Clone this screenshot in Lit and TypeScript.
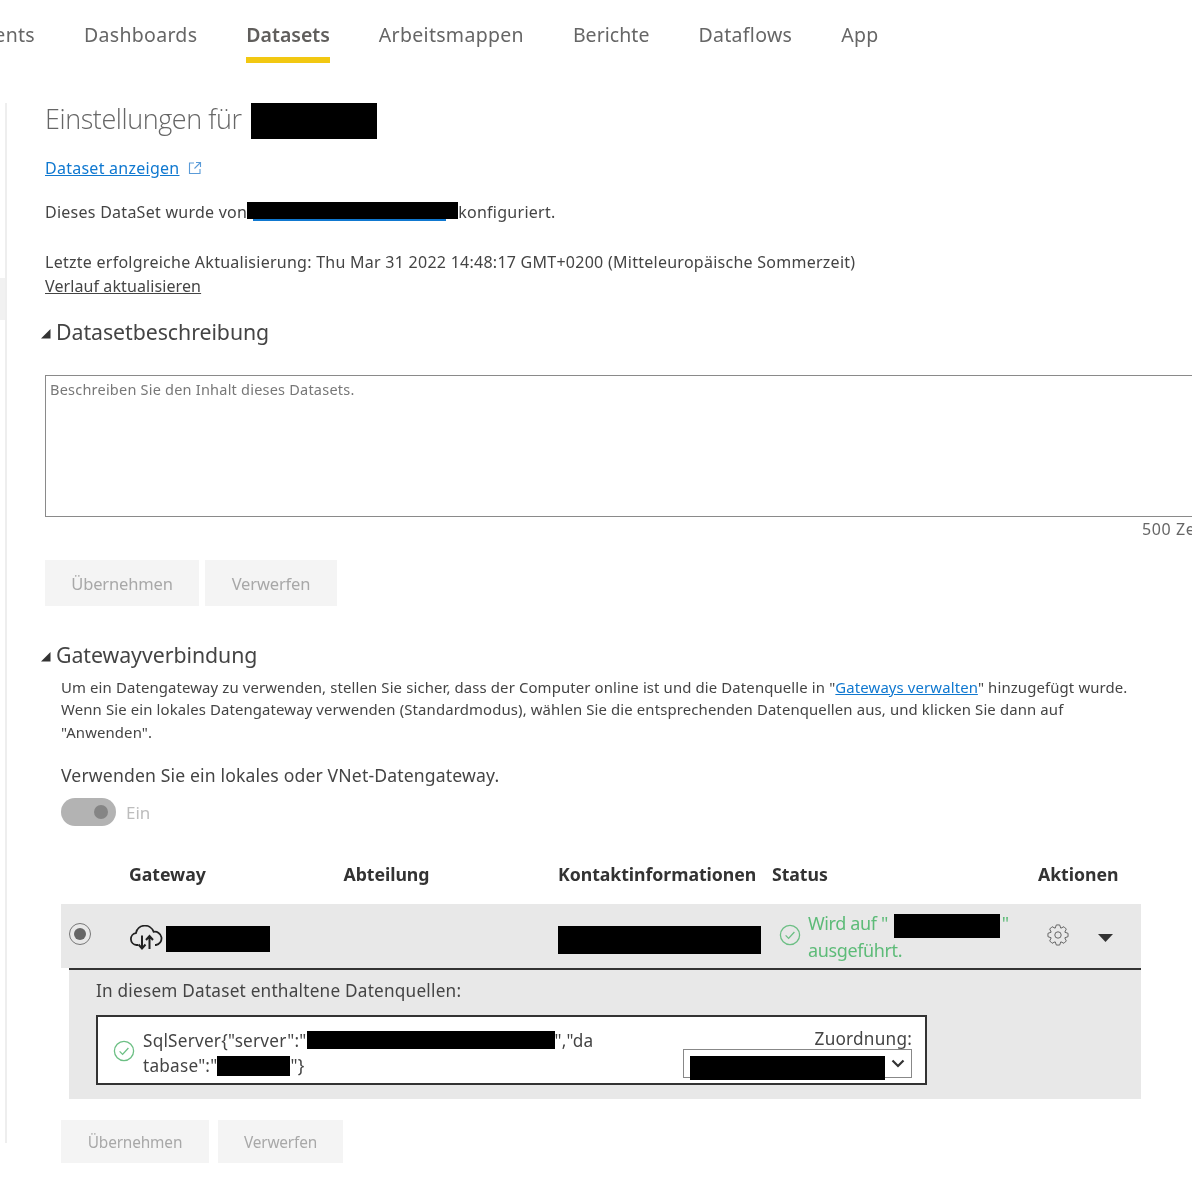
import { LitElement, html, css, svg } from "lit";
import { customElement } from "lit/decorators.js";

const check = (size: number) => html`<svg class="check" width=${size} height=${size} viewBox="0 0 22 22" fill="none">
  <circle cx="11" cy="11" r="9.6" stroke="#6cbf84" stroke-width="1.3"></circle>
  <path d="M6.6 11.4l3 3 5.8-6.4" stroke="#6cbf84" stroke-width="1.3"></path>
</svg>`;

const triangle = html`<svg class="tri" width="10" height="10" viewBox="0 0 10 10"><path d="M0 9.5L9.5 0v9.5z" fill="#333"></path></svg>`;

const gearPath = (() => {
  const cx = 11, cy = 11, n = 8;
  const pts: string[] = [];
  for (let i = 0; i < n; i++) {
    const a = (i / n) * Math.PI * 2;
    const d = Math.PI / n;
    const p = (r: number, t: number) => `${(cx + r * Math.cos(t)).toFixed(2)} ${(cy + r * Math.sin(t)).toFixed(2)}`;
    pts.push(`${i === 0 ? "M" : "L"}${p(7.4, a - d * 0.98)}`);
    pts.push(`L${p(10.2, a - d * 0.42)}`);
    pts.push(`L${p(10.2, a + d * 0.42)}`);
    pts.push(`L${p(7.4, a + d * 0.98)}`);
  }
  return pts.join(" ") + "Z";
})();

@customElement("app-root")
export class AppRoot extends LitElement {
  static styles = css`
    :host {
      display: block;
      width: 1192px;
      height: 1177px;
      overflow: hidden;
      background: #fff;
      font-family: "Noto Sans", "Open Sans", sans-serif;
      color: #333;
      filter: blur(0.3px);
    }
    .nav { display: flex; height: 63px; gap: 49px; font-size: 19.5px; color: #666; letter-spacing: 0.3px; }
    .tab { height: 63px; box-sizing: border-box; padding-top: 20px; line-height: 29px; white-space: nowrap; }
    .tab.cut { width: 35px; display: flex; justify-content: flex-end; overflow: hidden; }
    .tab.on { font-weight: 600; border-bottom: 6px solid #f2c811; color: #605e5c; letter-spacing: 0; }
    .tab.tight { letter-spacing: 0.05px; }
    .page { display: flex; }
    .side { width: 5px; height: 1040px; margin-top: 40px; border-right: 2px solid #eee; flex: none; }
    .side div { margin-top: 175px; height: 42px; background: #f1f1f1; }
    .main { padding-left: 38px; flex: 1; min-width: 0; }
    .redact { display: inline-block; background: #000; vertical-align: top; }
    .title { display: flex; gap: 9px; align-items: center; margin-top: 40px; height: 36px; font-size: 27px; font-weight: 300; color: #666; font-family: "Open Sans", sans-serif; letter-spacing: -0.43px; }
    .title .txt { padding-bottom: 6px; }
    .title .redact { width: 126px; height: 36px; }
    .body { font-size: 16px; line-height: 24px; letter-spacing: 0.26px; white-space: nowrap; color: #444; }
    .linkrow { display: flex; align-items: center; gap: 9px; margin-top: 17px; height: 24px; }
    a { color: #0f78d0; text-decoration: underline; }
    .byline { margin-top: 20px; height: 24px; display: flex; }
    .byline .who { position: relative; width: 211px; height: 24px; }
    .byline .who i { position: absolute; left: 6px; right: 12px; top: 19px; height: 1.5px; background: #0f78d0; }
    .byline .who .redact { position: absolute; left: 0; top: 2px; width: 211px; height: 17px; }
    .updated { margin-top: 26px; }
    .updated a { color: #444; display: block; letter-spacing: 0.1px; }
    .sec { display: flex; align-items: center; gap: 5px; margin-left: -4px; font-size: 21.3px; line-height: 30px; color: #444; letter-spacing: -0.05px; white-space: nowrap; }
    .sec.one { margin-top: 19px; }
    .tri { flex: none; margin-top: 3px; }
    .area { margin-top: 28px; width: 1300px; height: 142px; box-sizing: border-box; border: 1.5px solid #8a8a8a; padding: 2px 4px; font-size: 14.5px; line-height: 22px; letter-spacing: 0.22px; color: #777; }
    .count { margin-left: 1097px; height: 24px; margin-top: 0; font-size: 16px; line-height: 24px; color: #666; white-space: nowrap; letter-spacing: 0.6px; }
    .btns { display: flex; gap: 6px; margin-top: 19px; }
    .btn { height: 46px; display: flex; align-items: center; justify-content: center; background: #f4f4f4; color: #a8a8a8; font-size: 16.5px; letter-spacing: -0.15px; }
    .b1 { width: 154px; } .b2 { width: 132px; }
    .sec.two { margin-top: 34px; }
    .inner { margin-left: 16px; }
    .desc { font-size: 14.9px; line-height: 22.4px; letter-spacing: 0.13px; width: 1090px; color: #444; margin-top: 6px; white-space: nowrap; }
    .q { margin-top: 19px; font-size: 17.6px; line-height: 26px; letter-spacing: 0.15px; color: #444; white-space: nowrap; }
    .tog { display: flex; align-items: center; gap: 10px; margin-top: 10px; height: 28px; font-size: 17px; color: #bdbdbd; }
    .sw { width: 55px; height: 28px; border-radius: 14px; background: #b3b3b3; display: flex; align-items: center; justify-content: flex-end; padding-right: 8px; box-sizing: border-box; }
    .sw i { width: 14px; height: 14px; border-radius: 50%; background: #858585; }
    .grid { display: grid; grid-template-columns: 68px 214.5px 214.5px 214px 266px 103px; width: 1080px; }
    .head { margin-top: 34px; height: 44px; font-size: 17.7px; font-weight: 700; line-height: 28px; letter-spacing: -0.05px; color: #333; white-space: nowrap; }
    .row { height: 64px; background: #e8e8e8; position: relative; }
    .radio { margin: 19px 0 0 8px; width: 22px; height: 22px; box-sizing: border-box; border-radius: 50%; border: 1.5px solid #777; display: flex; align-items: center; justify-content: center; }
    .radio i { width: 12px; height: 12px; border-radius: 50%; background: #666; }
    .gw { display: flex; align-items: flex-start; padding-top: 21px; gap: 3px; }
    .gw .redact { width: 104px; height: 26px; margin-top: 1px; }
    .contact { padding-top: 22px; }
    .contact .redact { width: 203px; height: 28px; }
    .status { display: flex; gap: 7px; padding-left: 7px; }
    .status .check { margin-top: 20px; flex: none; }
    .status .txt { font-size: 18px; line-height: 25px; letter-spacing: -0.38px; color: #5dbb78; padding-top: 7px; white-space: nowrap; }
    .status .txt .redact { width: 106px; height: 24px; margin: 3px 2px 0 6px; position: relative; }
    .act { display: flex; align-items: flex-start; padding-left: 9px; gap: 29px; }
    .act .gear { margin-top: 20px; }
    .act .caret { margin-top: 30px; }
    .panel { margin-left: 8px; width: 1072px; height: 131px; box-sizing: border-box; background: #e8e8e8; border-top: 2px solid #333; padding: 9px 0 0 27px; font-size: 17.2px; letter-spacing: 0.22px; color: #444; }
    .panel .lead { line-height: 24px; white-space: nowrap; }
    .src { margin-top: 12px; width: 831px; height: 70px; box-sizing: border-box; border: 2px solid #333; background: #fff; display: flex; }
    .src .check { margin: 23px 8px 0 15px; flex: none; }
    .src .name { width: 470px; padding-top: 11px; line-height: 25px; white-space: nowrap; flex: none; }
    .src .name .redact { height: 18px; margin-top: 3px; }
    .src .name .redact.tall { height: 20px; }
    .src .map { margin-left: 70px; width: 229px; }
    .src .zu { text-align: right; line-height: 25px; height: 32px; padding-top: 9px; box-sizing: border-box; }
    .sel { position: relative; height: 29px; box-sizing: border-box; border: 1.5px solid #888; margin-top: 0; display: flex; justify-content: flex-end; align-items: center; padding-right: 6px; }
    .sel .redact { position: absolute; left: 6px; top: 5.500px; width: 195px; height: 24px; }
    .btns.low { gap: 9px; margin-top: 21px; }
    .btns.low .btn { height: 43px; box-sizing: border-box; padding-top: 2px; font-size: 15.4px; }
    .c1 { width: 148px; } .c2 { width: 125px; }
  `;

  render() {
    return html`
      <div class="nav">
        <div class="tab cut"><span>Contents</span></div>
        <div class="tab">Dashboards</div>
        <div class="tab on">Datasets</div>
        <div class="tab">Arbeitsmappen</div>
        <div class="tab tight">Berichte</div>
        <div class="tab">Dataflows</div>
        <div class="tab">App</div>
      </div>
      <div class="page">
        <div class="side"><div></div></div>
        <div class="main">
          <div class="title"><span class="txt">Einstellungen für</span><span class="redact"></span></div>
          <div class="body linkrow">
            <a href="#">Dataset anzeigen</a>
            <svg width="14" height="14" viewBox="0 0 14 14" fill="none" stroke="#5a9bd8" stroke-width="1.1">
              <path d="M6 2H1.5v10.5H12V8"></path><path d="M8 1.5h4.5V6M12.5 1.5L6.5 7.5"></path>
            </svg>
          </div>
          <div class="body byline">
            <span>Dieses DataSet wurde von</span>
            <span class="who"><i></i><span class="redact"></span></span>
            <span>konfiguriert.</span>
          </div>
          <div class="body updated">
            Letzte erfolgreiche Aktualisierung: Thu Mar 31 2022 14:48:17 GMT+0200 (Mitteleuropäische Sommerzeit)
            <a href="#">Verlauf aktualisieren</a>
          </div>
          <div class="sec one">${triangle}<span>Datasetbeschreibung</span></div>
          <div class="area">Beschreiben Sie den Inhalt dieses Datasets.</div>
          <div class="count">500 Zeichen</div>
          <div class="btns"><div class="btn b1">Übernehmen</div><div class="btn b2">Verwerfen</div></div>
          <div class="sec two">${triangle}<span>Gatewayverbindung</span></div>
          <div class="inner">
            <div class="desc">Um ein Datengateway zu verwenden, stellen Sie sicher, dass der Computer online ist und die Datenquelle in "<a href="#">Gateways verwalten</a>" hinzugefügt wurde.<br>Wenn Sie ein lokales Datengateway verwenden (Standardmodus), wählen Sie die entsprechenden Datenquellen aus, und klicken Sie dann auf<br>"Anwenden".</div>
            <div class="q">Verwenden Sie ein lokales oder VNet-Datengateway.</div>
            <div class="tog"><div class="sw"><i></i></div><span>Ein</span></div>
            <div class="grid head">
              <div></div><div>Gateway</div><div>Abteilung</div><div>Kontaktinformationen</div><div>Status</div><div>Aktionen</div>
            </div>
            <div class="grid row">
              <div><div class="radio"><i></i></div></div>
              <div class="gw">
                <svg width="34" height="26" viewBox="0 0 34 26" fill="none" stroke="#222" stroke-width="1.8">
                  <path d="M9 20H7.5a6 6 0 0 1-.6-11.9A9.2 9.2 0 0 1 24.600 6.800 6.700 6.700 0 0 1 27 20h-1"></path>
                  <path stroke-width="2" d="M13 10.500V23M9.500 19.500L13 23.500l3.500-4M20.500 24V11.500M17 15l3.500-4 3.500 4"></path>
                </svg>
                <span class="redact"></span>
              </div>
              <div></div>
              <div class="contact"><span class="redact"></span></div>
              <div class="status">
                ${check(22)}
                <div class="txt">Wird auf "<span class="redact"></span>"<br>ausgeführt.</div>
              </div>
              <div class="act">
                <svg class="gear" width="22" height="22" viewBox="0 0 22 22" fill="none" stroke="#666" stroke-width="1">
                  ${svg`<path d=${gearPath}></path><circle cx="11" cy="11" r="3.200"></circle>`}
                </svg>
                <svg class="caret" width="15" height="8" viewBox="0 0 15 8"><path d="M0 0h15L7.500 8z" fill="#333"></path></svg>
              </div>
            </div>
            <div class="panel">
              <div class="lead">In diesem Dataset enthaltene Datenquellen:</div>
              <div class="src">
                ${check(22)}
                <div class="name">SqlServer{"server":"<span class="redact" style="width:248px"></span>","da<br>tabase":"<span class="redact tall" style="width:73px"></span>"}</div>
                <div class="map">
                  <div class="zu">Zuordnung:</div>
                  <div class="sel">
                    <span class="redact"></span>
                    <svg width="14" height="9" viewBox="0 0 14 9" fill="none" stroke="#333" stroke-width="2.200"><path d="M1.500 1.500L7 7l5.500-5.500"></path></svg>
                  </div>
                </div>
              </div>
            </div>
            <div class="btns low"><div class="btn c1">Übernehmen</div><div class="btn c2">Verwerfen</div></div>
          </div>
        </div>
      </div>
    `;
  }
}
